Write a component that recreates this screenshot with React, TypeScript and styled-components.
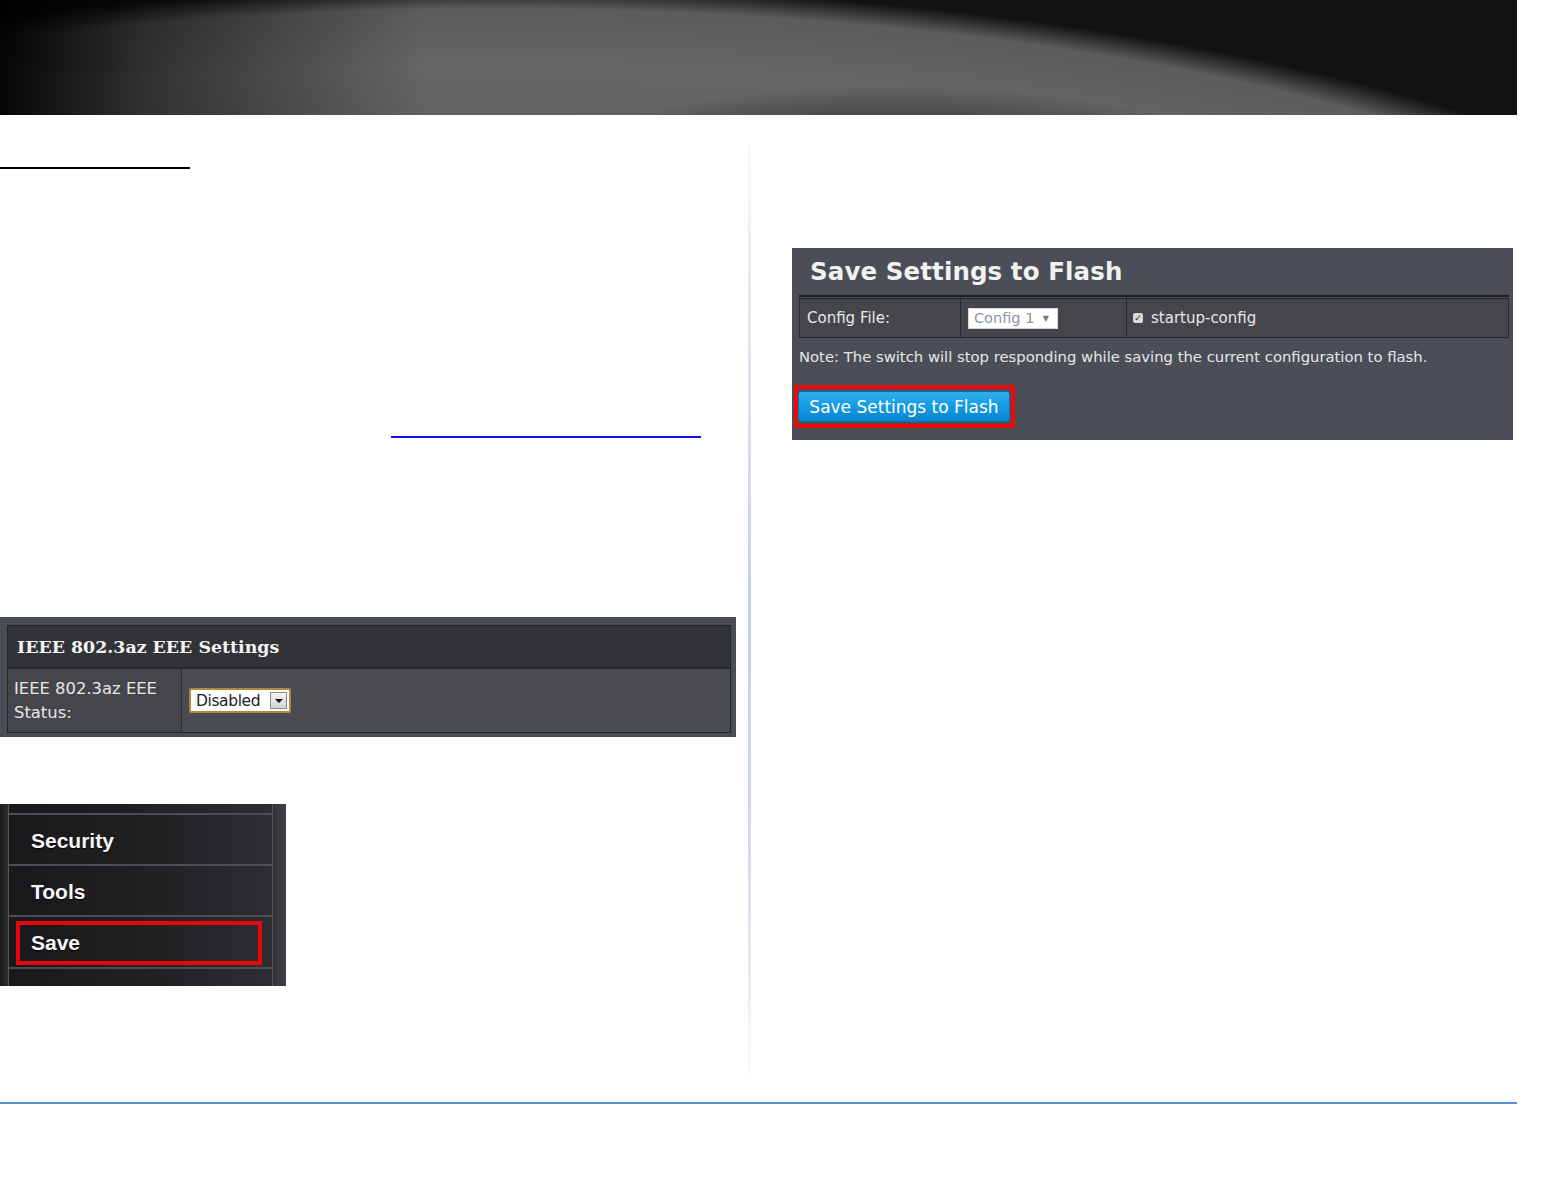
import React from 'react';
import styled, { createGlobalStyle } from 'styled-components';

const GlobalStyle = createGlobalStyle`
  html, body {
    margin: 0;
    padding: 0;
    background: #fff;
  }
  body {
    font-family: "DejaVu Sans", "Liberation Sans", sans-serif;
  }
  *, *::before, *::after {
    box-sizing: border-box;
  }
`;

const Page = styled.div`
  width: 1548px;
  display: flex;
  flex-direction: column;
`;

const Banner = styled.div`
  width: 1517px;
  height: 115px;
  background-color: #0d0d0d;
  background-image:
    linear-gradient(90deg, rgba(0, 0, 0, 0.95) 0%, rgba(0, 0, 0, 0.5) 10%, rgba(0, 0, 0, 0) 28%),
    radial-gradient(ellipse 520px 215px at 900px 300px, #262626 0%, #2b2b2b 70%, rgba(43, 43, 43, 0) 100%),
    radial-gradient(ellipse 1368px 433px at 500px 420px, #4a4a4a 0%, #666 82%, #5c5c5c 95%, #121212 100%);
`;

const Body = styled.div`
  display: flex;
  height: 987px;
`;

const LeftColumn = styled.div`
  width: 748px;
  display: flex;
  flex-direction: column;
  align-items: flex-start;
`;

const Divider = styled.div`
  width: 3px;
  margin-top: 30px;
  height: 930px;
  background: linear-gradient(
    180deg,
    rgba(230, 234, 240, 0.3) 0%,
    #e2e7ef 20%,
    #c6d1e0 50%,
    #d3dbe7 75%,
    rgba(236, 239, 244, 0.3) 100%
  );
`;

const RightColumn = styled.div`
  flex: 1;
  display: flex;
  flex-direction: column;
  align-items: flex-start;
`;

const Rule = styled.div<{ $top: number; $left?: number; $width: number; $color: string }>`
  margin-top: ${(p) => p.$top}px;
  margin-left: ${(p) => p.$left ?? 0}px;
  width: ${(p) => p.$width}px;
  border-bottom: 2px solid ${(p) => p.$color};
`;

/* ---------- IEEE EEE panel ---------- */

const EeePanel = styled.div`
  margin-top: 179px;
  width: 736px;
  padding: 8px 5px 4px 7px;
  background: #4a4c54;
`;

const EeeTable = styled.div`
  border: 1px solid #222327;
  display: flex;
  flex-direction: column;
`;

const EeeHeader = styled.div`
  height: 43px;
  display: flex;
  align-items: center;
  padding-left: 9px;
  background: #323337;
  border-bottom: 2px solid #26272b;
  color: #f3f3f3;
  font-family: "DejaVu Serif", "Liberation Serif", serif;
  font-weight: 700;
  font-size: 17.4px;
`;

const EeeRow = styled.div`
  display: flex;
  height: 63px;
`;

const EeeLabel = styled.div`
  width: 174px;
  padding-left: 6px;
  display: flex;
  align-items: center;
  background: #45464b;
  border-right: 1px solid #2a2b2f;
  color: #e6e6e6;
  font-size: 16.4px;
  line-height: 24px;
`;

const EeeValue = styled.div`
  flex: 1;
  display: flex;
  align-items: center;
  padding-left: 7px;
  background: #4a4b51;
`;

const LegacySelect = styled.div`
  width: 102px;
  height: 25px;
  border: 2px solid #b08a3c;
  border-radius: 2px;
  background: #fff;
  display: flex;
  align-items: center;
  justify-content: space-between;
  padding: 0 2px 0 5px;
  color: #1d1d2a;
  font-size: 15.5px;
  letter-spacing: -0.4px;
`;

const LegacyArrow = styled.span`
  width: 17px;
  height: 17px;
  border: 1px solid #8a8a8a;
  background: linear-gradient(#f2f2f2, #d4d4d4);
  display: flex;
  align-items: center;
  justify-content: center;
  &::before {
    content: '';
    border-left: 4px solid transparent;
    border-right: 4px solid transparent;
    border-top: 4px solid #111;
  }
`;

/* ---------- Side menu ---------- */

const MenuPanel = styled.div`
  margin-top: 67px;
  width: 286px;
  height: 182px;
  display: flex;
  background: #2a2a2d;
`;

const MenuEdge = styled.div<{ $side: 'left' | 'right' }>`
  width: ${(p) => (p.$side === 'left' ? 9 : 14)}px;
  background: ${(p) =>
    p.$side === 'left'
      ? 'linear-gradient(90deg, #1a1a1c, #2e2e31)'
      : 'linear-gradient(90deg, #333336, #404044)'};
  border-${(p) => (p.$side === 'left' ? 'right' : 'left')}: 1px solid #56565a;
`;

const MenuList = styled.div`
  flex: 1;
  display: flex;
  flex-direction: column;
`;

const MenuItem = styled.div<{ $height: number; $active?: boolean }>`
  position: relative;
  height: ${(p) => p.$height}px;
  display: flex;
  align-items: center;
  padding-left: 22px;
  padding-top: 2px;
  border-bottom: 2px solid #4e4e52;
  background: linear-gradient(90deg, #19191b 0%, #212124 55%, #2e2e32 100%);
  color: #f7f7f7;
  font-family: "Liberation Sans", Arial, sans-serif;
  font-weight: 700;
  font-size: 21px;
  text-shadow: 0 1px 1px #000;

  &:last-child {
    border-bottom: none;
  }

  ${(p) =>
    p.$active &&
    `
    &::after {
      content: '';
      position: absolute;
      left: 7px;
      right: 10px;
      top: 4px;
      bottom: 2px;
      border: 4px solid #e8060a;
    }
  `}
`;

/* ---------- Save settings panel ---------- */

const FlashPanel = styled.div`
  margin-top: 133px;
  margin-left: 41px;
  width: 721px;
  height: 192px;
  padding: 0 4px 0 7px;
  background: #4c4e57;
  display: flex;
  flex-direction: column;
`;

const FlashTitle = styled.div`
  height: 49px;
  display: flex;
  align-items: center;
  padding-left: 11px;
  border-bottom: 2px solid #1e1f22;
  color: #f1f1f1;
  font-weight: 700;
  font-size: 24.5px;
  letter-spacing: 0.1px;
`;

const FlashRow = styled.div`
  margin-top: 1px;
  height: 40px;
  display: flex;
  border: 1px solid #27282c;
  background: #45464c;
  color: #e8e8e8;
  font-size: 15px;
`;

const FlashCell = styled.div<{ $width?: number }>`
  ${(p) => (p.$width ? `width: ${p.$width}px;` : 'flex: 1;')}
  display: flex;
  align-items: center;
  gap: 8px;
  padding-left: 7px;
  border-right: 1px solid #27282c;

  &:last-child {
    border-right: none;
    padding-left: 6px;
  }
`;

const ConfigSelect = styled.div`
  width: 90px;
  height: 21px;
  background: #fff;
  border: 1px solid #d8d8d8;
  display: flex;
  align-items: center;
  justify-content: space-between;
  padding: 0 8px 0 5px;
  color: #8a95a8;
  font-size: 14.5px;

  &::after {
    content: '▼';
    font-size: 8px;
    color: #7a7a7a;
  }
`;

const CheckBox = styled.span`
  width: 10px;
  height: 10px;
  border-radius: 2px;
  background: #d9d9d9;
  display: inline-flex;
  align-items: center;
  justify-content: center;
  color: #333;
  font-size: 9px;
  line-height: 1;
  font-weight: 700;
`;

const Note = styled.div`
  margin-top: 9px;
  color: #e6e6e6;
  font-size: 14.8px;
  line-height: 20px;
`;

const Highlight = styled.div`
  margin-top: 18px;
  margin-left: -5px;
  align-self: flex-start;
  border: 4px solid #ee0a0a;
  padding: 2px 1px 2px 0;
`;

const FlashButton = styled.button`
  height: 31px;
  width: 212px;
  border: 1px solid #0a6fae;
  border-radius: 3px;
  background: linear-gradient(180deg, #2eafee 0%, #159ae2 50%, #0b84cf 100%);
  color: #fff;
  font-family: "DejaVu Sans", sans-serif;
  font-size: 17px;
  padding: 0;
  cursor: pointer;
`;

export default function App() {
  return (
    <>
      <GlobalStyle />
      <Page>
        <Banner />
        <Body>
          <LeftColumn>
            <Rule $top={52} $width={190} $color="#000" />
            <Rule $top={267} $left={391} $width={310} $color="#1010ee" />

            <EeePanel>
              <EeeTable>
                <EeeHeader>IEEE 802.3az EEE Settings</EeeHeader>
                <EeeRow>
                  <EeeLabel>
                    IEEE 802.3az EEE
                    <br />
                    Status:
                  </EeeLabel>
                  <EeeValue>
                    <LegacySelect>
                      Disabled
                      <LegacyArrow />
                    </LegacySelect>
                  </EeeValue>
                </EeeRow>
              </EeeTable>
            </EeePanel>

            <MenuPanel>
              <MenuEdge $side="left" />
              <MenuList>
                <MenuItem $height={11} />
                <MenuItem $height={51}>Security</MenuItem>
                <MenuItem $height={51}>Tools</MenuItem>
                <MenuItem $height={52} $active>
                  Save
                </MenuItem>
                <MenuItem $height={17} />
              </MenuList>
              <MenuEdge $side="right" />
            </MenuPanel>
          </LeftColumn>

          <Divider />

          <RightColumn>
            <FlashPanel>
              <FlashTitle>Save Settings to Flash</FlashTitle>
              <FlashRow>
                <FlashCell $width={161}>Config File:</FlashCell>
                <FlashCell $width={166}>
                  <ConfigSelect>Config 1</ConfigSelect>
                </FlashCell>
                <FlashCell>
                  <CheckBox>✓</CheckBox>
                  startup-config
                </FlashCell>
              </FlashRow>
              <Note>Note: The switch will stop responding while saving the current configuration to flash.</Note>
              <Highlight>
                <FlashButton>Save Settings to Flash</FlashButton>
              </Highlight>
            </FlashPanel>
          </RightColumn>
        </Body>
        <Rule $top={0} $width={1517} $color="#5a8fd6" />
      </Page>
    </>
  );
}
